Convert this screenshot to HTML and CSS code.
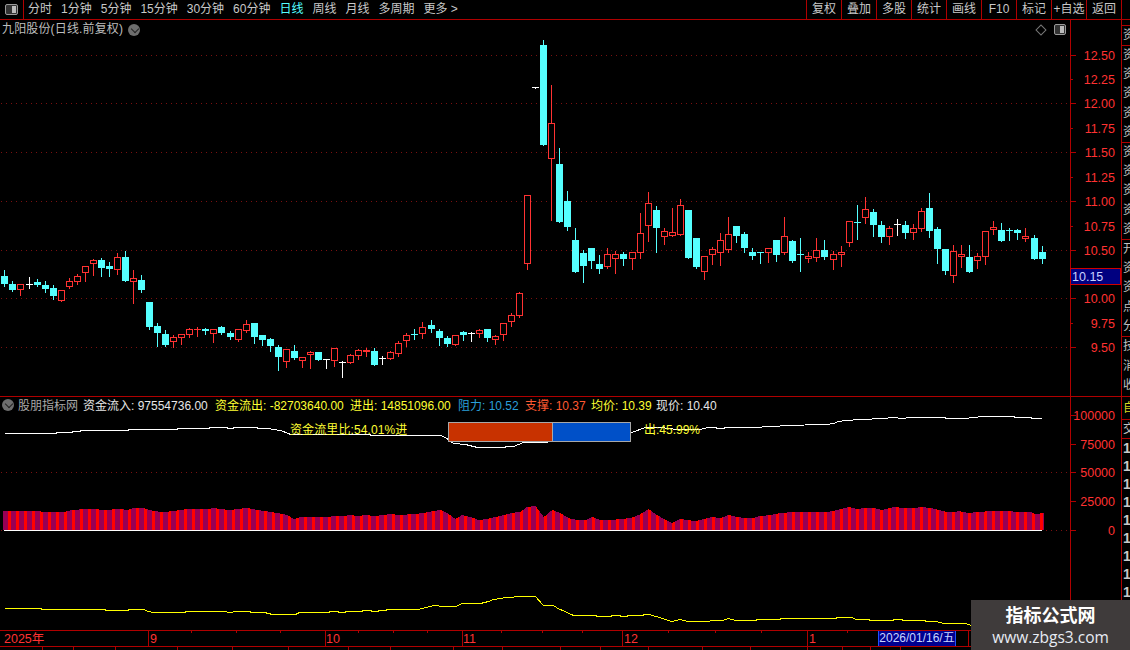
FILE: index.html
```html
<!DOCTYPE html>
<html lang="zh">
<head>
<meta charset="utf-8">
<title>九阳股份 日线</title>
<link rel="stylesheet" href="styles.css">
</head>
<body>
<div class="app">
  <header class="toolbar">
    <div class="layout-btn"><span class="panel-icon"><i></i></span></div>
    <nav class="periods">
      <span>分时</span><span>1分钟</span><span>5分钟</span><span>15分钟</span><span>30分钟</span><span>60分钟</span>
      <span class="active">日线</span><span>周线</span><span>月线</span><span>多周期</span><span>更多 &gt;</span>
    </nav>
    <div class="actions">
      <span>复权</span><span>叠加</span><span>多股</span><span>统计</span><span>画线</span><span>F10</span><span>标记</span><span>+自选</span><span>返回</span>
    </div>
    <div class="gutter"></div>
  </header>

  <section class="pane pane-main">
    <svg id="priceChart" class="chart" width="1121" height="376" viewBox="0 20 1121 376"></svg>
    <div class="title">九阳股份(日线.前复权)<span class="chev"></span></div>
    <div class="corner"><span class="diamond"></span><span class="panel-icon small"><i></i></span></div>
    <aside class="side side-main">
      <div class="side-group g1"><b>资</b></div>
      <div class="side-group g5"><b>资</b><b>资</b><b>资</b><b>资</b><b>资</b></div>
      <div class="side-group g5"><b>资</b><b>资</b><b>资</b><b>资</b><b>资</b></div>
      <div class="side-group g5"><b>开</b><b>资</b><b>资</b><b>点</b><b>分</b></div>
      <div class="side-group g3"><b>技</b><b>消</b><b>收</b></div>
    </aside>
  </section>

  <section class="pane pane-sub">
    <svg id="flowChart" class="chart" width="1121" height="233" viewBox="0 397 1121 233"></svg>
    <div class="legend">
      <span class="chev"></span><span class="name">股朋指标网</span>
      <span class="white w1">资金流入: 97554736.00</span>
      <span class="yellow w2">资金流出: -82703640.00</span>
      <span class="yellow w3">进出: 14851096.00</span>
      <span class="blue w4">阻力: 10.52</span>
      <span class="orange w5">支撑: 10.37</span>
      <span class="yellow w6">均价: 10.39</span>
      <span class="white">现价: 10.40</span>
    </div>
    <div class="ratio">
      <span class="ratio-in">资金流里比:54.01%进</span>
      <div class="ratio-bar"><i class="in"></i><i class="out"></i></div>
      <span class="ratio-out">出:45.99%</span>
    </div>
    <aside class="side side-sub">
      <div class="side-group g-tall"><b class="yellow">自</b></div>
      <div class="side-group g1"><b>交</b></div>
      <div class="side-group g-digits"><b>1</b><b>1</b><b>1</b><b>1</b><b>1</b><b>1</b><b>1</b><b>1</b><b>1</b></div>
    </aside>
  </section>

  <footer class="timeline">
    <svg id="timeAxis" class="chart" width="1130" height="20" viewBox="0 630 1130 20"></svg>
    <div class="date-tag">2026/01/16/五</div>
  </footer>

  <div class="watermark">
    <strong>指标公式网</strong>
    <span>www.zbgs3.com</span>
  </div>
</div>
<script src="chart.js"></script>
</body>
</html>
```

FILE: styles.css
```css
* { box-sizing: border-box; }
html, body { margin: 0; padding: 0; background: #000; }
body { width: 1130px; height: 650px; overflow: hidden; font-family: "Liberation Sans", "Noto Sans CJK SC", sans-serif; font-size: 12px; color: #c8c8c8; }
.app { position: relative; width: 1130px; height: 650px; display: flex; flex-direction: column; background: #000; }

.toolbar { display: flex; height: 20px; border-bottom: 1px solid #b00000; line-height: 19px; flex: none; }
.layout-btn { width: 24px; border-right: 1px solid #b00000; display: flex; align-items: center; justify-content: center; }
.panel-icon { display: block; width: 13px; height: 11px; border: 1px solid #9a9a9a; border-radius: 2px; background: #333; position: relative; }
.panel-icon i { position: absolute; right: 1px; top: 1px; bottom: 1px; width: 4px; background: #bbb; }
.periods { display: flex; gap: 9px; padding-left: 4px; flex: 1; }
.periods .active { color: #55ffff; }
.actions { display: flex; }
.actions span { width: 35px; border-left: 1px solid #b00000; text-align: center; white-space: nowrap; }
.gutter { width: 9px; border-left: 1px solid #b00000; }

.pane { position: relative; flex: none; }
.pane-main { height: 377px; border-bottom: 1px solid #b00000; }
.pane-sub { height: 233px; }
.chart { display: block; position: absolute; left: 0; top: 0; }
.chart text { font-family: "Liberation Sans", "Noto Sans CJK SC", sans-serif; font-size: 12.5px; fill: #ff3232; }

.title { position: absolute; left: 2px; top: 1px; line-height: 17px; display: flex; align-items: center; color: #bdbdbd; letter-spacing: 0.15px; }
.chev { display: inline-block; width: 12px; height: 12px; border-radius: 50%; background: #6e6e6e; position: relative; margin-left: 5px; flex: none; }
.chev::after { content: ""; position: absolute; left: 3.5px; top: 2.5px; width: 5px; height: 5px; border-right: 1.5px solid #222; border-bottom: 1.5px solid #222; transform: rotate(45deg); }
.corner { position: absolute; left: 1037px; top: 4px; display: flex; align-items: center; gap: 9px; }
.diamond { width: 8px; height: 8px; border: 1px solid #777; transform: rotate(45deg); }
.panel-icon.small { width: 12px; height: 11px; }

.side { position: absolute; left: 1121px; top: 0; width: 9px; bottom: 0; overflow: hidden; display: flex; flex-direction: column; border-left: 1px solid #b00000; }
.side-main { padding-top: 5px; }
.side-group { display: flex; flex-direction: column; flex: none; border-top: 1px solid #b00000; padding-left: 1px; overflow: hidden; }
.side-group b { display: block; flex: 1; font-weight: normal; width: 7px; white-space: nowrap; overflow: hidden; color: #c0c0c0; line-height: 19px; }
.side-group.g1 { height: 20px; }
.side-group.g5 { height: 97px; }
.side-group.g3 { height: 60px; }
.side-sub .side-group:first-child { border-top: 0; }
.side-group.g-tall { height: 22px; }
.side-group.g-tall b { line-height: 22px; }
.side-sub .g1 { height: 19px; }
.side-group.g-digits { border-top: 1px solid #b00000; padding-top: 0; }
.side-group.g-digits b { flex: none; height: 18px; line-height: 18px; font-size: 14px; font-weight: bold; color: #c8c8c8; }
.side-group b.yellow { color: #d8d820; }

.legend { position: absolute; left: 0; top: -1px; height: 17px; display: flex; align-items: center; white-space: nowrap; }
.legend .chev { margin-left: 2px; margin-right: 4px; }
.legend .name { color: #a8a8a8; width: 65px; }
.legend .w1 { width: 132px; }
.legend .w2 { width: 135px; }
.legend .w3 { width: 108px; }
.legend .w4 { width: 67px; }
.legend .w5 { width: 66px; }
.legend .w6 { width: 65px; }
.white { color: #e6e6e6; }
.yellow { color: #ffff33; }
.blue { color: #2a9fd8; }
.orange { color: #ff5a32; }

.ratio { position: absolute; left: 290px; top: 25px; display: flex; align-items: flex-start; color: #ffff33; white-space: nowrap; line-height: 17px; }
.ratio-in { width: 158px; letter-spacing: 0.1px; }
.ratio-out { margin-left: 13px; }
.ratio-bar { display: flex; width: 183px; height: 20px; border: 1px solid #a8a8a8; background: #a8a8a8; }
.ratio-bar i { display: block; height: 100%; }
.ratio-bar .in { width: 103px; background: #c83200; margin-right: 1px; }
.ratio-bar .out { flex: 1; background: #0050c8; }

.timeline { position: relative; height: 20px; flex: none; }
.date-tag { position: absolute; left: 878px; top: 1px; width: 78px; height: 15px; background: #000090; color: #c8d4ff; line-height: 15px; text-align: center; white-space: nowrap; border-left: 1px solid #2050ff; border-right: 1px solid #2050ff; }

.watermark { position: absolute; left: 971px; top: 600px; width: 159px; height: 50px; background: #3f3b3b; color: #fff; display: flex; flex-direction: column; align-items: center; justify-content: center; }
.watermark strong { font-size: 18px; line-height: 24px; font-weight: bold; }
.watermark span { font-size: 15.5px; line-height: 19px; color: #e8ecf4; font-family: "Open Sans", "Liberation Sans", sans-serif; }
```

FILE: chart.js
```js
var NS = 'http://www.w3.org/2000/svg';
var RED = '#ff3232', CYAN = '#55ffff', WHITE = '#ffffff', AXIS = '#b00000', GRID = '#7a1010';

function add(svg, tag, attrs, text) {
  var el = document.createElementNS(NS, tag);
  for (var k in attrs) el.setAttribute(k, attrs[k]);
  if (text !== undefined) el.textContent = text;
  svg.appendChild(el);
  return el;
}
function hline(svg, y, x1, x2, c) { add(svg, 'rect', { x: x1, y: y, width: x2 - x1, height: 1, fill: c }); }
function vline(svg, x, y1, y2, c) { add(svg, 'rect', { x: x, y: y1, width: 1, height: y2 - y1, fill: c }); }
function dotted(svg, y, x2) {
  add(svg, 'line', { x1: 1, y1: y + 0.5, x2: x2, y2: y + 0.5, stroke: GRID, 'stroke-width': 1, 'stroke-dasharray': '1 4' });
}
/* every series is read in zoom coordinates: [x, y] at a given scale, from a given origin */
function pts(ox, oy, sx, sy, list) {
  var r = [];
  for (var i = 0; i < list.length; i += 2) r.push([ox + list[i] / sx, oy + list[i + 1] / sy]);
  return r;
}
function poly(svg, p, c) {
  add(svg, 'polyline', {
    points: p.map(function (q) { return Math.round(q[0]) + '.5,' + Math.round(q[1]) + '.5'; }).join(' '),
    fill: 'none', stroke: c, 'stroke-width': 1, 'shape-rendering': 'crispEdges'
  });
}
function cx(i) { return Math.round(4.4 + 8.04 * i); }

/* ---------- price pane ---------- */
/* [type, wickTop, bodyTop, bodyBottom, wickBottom] */
var seg1 = [
['c',90,108,132,138],['c',123,132,150,153],['r',132,132,150,165],['w',111,131,133,144],['c',117,126,135,138],['c',123,135,147,156],['c',135,144,168,177],['r',150,150,183,183],['r',114,123,141,144],['r',102,108,126,132],['r',78,78,99,123],['r',57,60,72,105],['c',54,60,84,108],['c',66,78,87,108],['r',39,51,90,102],['c',33,51,123,123],['r',90,114,126,189],['c',105,120,150,156],['c',186,186,261,267],['c',249,258,279,318],['c',270,282,315,318],['r',285,291,306,321],['r',282,282,294,312],['r',264,267,285,291],['r',261,266,268,288],['c',264,267,273,282],['r',267,267,282,306],['c',258,261,279,282],['c',273,279,291,297],['r',267,267,300,303],['r',240,252,273,276],['c',249,249,291,309],['c',285,285,300,315],['c',294,297,318,333],['c',315,321,351,390],['r',327,327,366,381],['c',315,333,354,357],
['r',351,351,363,381],['r',333,336,345,384],['c',336,336,360,360],['w',357,357,359,384],['r',324,324,363,378],['w',363,366,368,411],['r',342,345,369,369],['r',327,330,348,357],['r',324,330,336,348],['c',324,333,375,375],['w',348,354,356,372],['r',333,336,357,357],['r',303,309,342,348],['r',279,285,303,318],['c',267,282,284,297],['r',246,261,282,294],['c',240,255,267,276],['c',267,273,294,315],['c',288,294,312,318],['r',285,285,315,315],['c',273,276,285,300],['w',276,278,280,303],['r',267,270,282,291],['c',267,267,294,303],['r',285,288,300,312],['r',249,249,285,300],['r',219,225,246,258],['r',156,159,228,231]
];
var seg2 = [
['r',496,496,701,717],['w',171,171,173,173],['c',30,45,345,345],['r',165,280,386,570],['c',354,402,576,576],['c',483,513,591,600],['c',594,630,726,726],['c',660,669,708,756],['c',654,654,693,714],['c',675,702,717,729],['r',654,672,711,714],['r',663,672,686,729],['c',666,672,687,705],['r',666,666,687,717],['r',549,609,669,684],['r',486,519,588,633],['c',528,540,594,666],['r',594,603,621,642],['r',534,606,618,618],['r',507,525,615,615],['c',540,540,684,684],['c',624,624,711,714],['r',678,678,726,747],['r',651,657,675,702],['r',609,630,669,705],['r',561,612,660,666],['c',588,588,618,636],['c',606,612,654,666],['c',654,666,678,687],['c',666,666,668,699],['r',654,654,669,696],['c',630,630,675,693],['r',561,618,669,672],['c',630,633,693,696]
];
var seg3 = [
['c',174,222,224,273],['r',216,229,237,246],['r',174,210,234,243],['c',180,210,231,237],['r',213,222,240,267],['r',198,216,225,258],['r',123,123,189,198],['c',75,126,128,177],['r',51,87,114,129],['c',87,96,135,168],['c',123,135,171,186],['r',138,144,171,192],['w',117,131,133,165],['c',123,135,159,174],['r',132,144,159,177],['r',84,93,147,153],['c',39,84,153,171],['c',141,147,207,249],['c',207,207,273,282],['r',195,213,288,306],['r',195,222,231,261],['c',195,231,276,276],['r',219,228,243,264],['r',153,153,231,252],['r',123,141,150,162],['c',129,150,183,183],['c',144,149,151,180],['c',147,150,159,177],['r',144,168,177,183],['c',165,174,237,237],['c',198,216,237,249]
];
var candles = [];
function load(seg, base) {
  seg.forEach(function (s) {
    candles.push([s[0], base + s[1] / 3, base + s[2] / 3, base + s[3] / 3, base + s[4] / 3]);
  });
}
load(seg1, 240); load(seg2, 30); load(seg3, 180);

var price = document.getElementById('priceChart');
[55, 103, 152, 201, 250, 298, 347].forEach(function (y) { dotted(price, y, 1068); });
vline(price, 1070, 20, 396, AXIS);

candles.forEach(function (d, i) {
  var x = cx(i), c = d[0] === 'c' ? CYAN : d[0] === 'r' ? RED : WHITE;
  var top = Math.round(d[1]), bt = Math.round(d[2]), bb = Math.round(d[3]), bot = Math.round(d[4]);
  vline(price, x, top, bot + 1, c);
  if (bb - bt <= 1) {
    hline(price, bt, x - 3, x + 4, c);
  } else if (d[0] === 'c') {
    add(price, 'rect', { x: x - 3, y: bt, width: 7, height: bb - bt, fill: c });
  } else {
    add(price, 'rect', { x: x - 3, y: bt, width: 7, height: bb - bt, fill: '#000' });
    add(price, 'rect', { x: x - 2.5, y: bt + 0.5, width: 6, height: bb - bt - 1, fill: 'none', stroke: c, 'stroke-width': 1 });
  }
});

var priceLabels = [['12.50',55],['12.25',79],['12.00',103],['11.75',128],['11.50',152],['11.25',177],['11.00',201],['10.75',226],['10.50',250],['10.00',298],['9.75',323],['9.50',347]];
priceLabels.forEach(function (l) {
  hline(price, l[1], 1071, l[0].slice(-2) === '00' || l[0].slice(-2) === '50' ? 1076 : 1073, AXIS);
  add(price, 'text', { x: 1115, y: l[1] + 5, 'text-anchor': 'end' }, l[0]);
});
add(price, 'rect', { x: 1070.5, y: 268.5, width: 50, height: 16, fill: '#000080', stroke: '#d00000', 'stroke-width': 1 });
var tag = add(price, 'text', { x: 1072, y: 281 }, '10.15');
tag.style.fill = '#c8d0ff';

/* ---------- money-flow pane ---------- */
var flow = document.getElementById('flowChart');
dotted(flow, 472, 1068);
dotted(flow, 530, 1068);
vline(flow, 1070, 397, 630, AXIS);

var tops = pts(0, 395, 3, 3, [0,348,120,348,125,351,190,351,210,346,250,342,290,342,300,345,330,345,340,342,360,342,380,345,400,339,430,339,445,345,470,349,490,352,510,349,540,345,560,342,620,342,640,339,660,342,690,345,710,342,740,339,770,345,800,349,830,354,860,360,880,372,900,366,980,366,1000,363,1030,363,1050,360,1070,363,1100,360,1120,363,1150,360,1170,357,1197,360])
  .concat(pts(400, 395, 3, 3, [0,360,40,357,70,354,100,348,120,345,140,354,165,372,185,360,210,366,235,375,260,372,285,366,310,360,335,354,360,350,380,336,405,333,430,366,455,345,480,354,505,370,530,375,555,375,575,366,600,375,630,375,660,372,690,369,715,360,745,342,765,357,790,372,815,384,840,372,860,375,885,378,910,372,935,366,960,369,985,360,1010,366,1035,369,1060,369,1078,363]))
  .concat(pts(760, 395, 3, 3, [0,363,30,360,60,354,100,351,200,351,230,345,265,336,290,342,310,339,340,339,365,345,400,336,430,339,460,339,485,336,510,339,535,345,560,351,600,349,625,354,650,351,680,349,750,349,780,351,810,351,825,357,849,354]));
function topAt(x) {
  for (var i = 1; i < tops.length; i++) {
    if (x <= tops[i][0]) {
      var a = tops[i - 1], b = tops[i], t = (x - a[0]) / ((b[0] - a[0]) || 1);
      return Math.round(a[1] + (b[1] - a[1]) * t);
    }
  }
  return Math.round(tops[tops.length - 1][1]);
}
for (var bx = 3; bx < 1044; bx++) {
  var phase = (bx - 3) % 8;
  add(flow, 'rect', { x: bx, y: topAt(bx), width: 1, height: 530 - topAt(bx), fill: phase >= 5 ? '#ff0000' : '#980055' });
}
hline(flow, 530, 4, 1042, WHITE);

var upper = pts(0, 395, 3, 3, [12,115,168,115,168,112,216,112,216,108,240,108,240,105,384,105,384,102,530,102,530,99,628,99,628,96,680,96,680,99,700,99,700,96,772,96,772,99,800,99,820,102,840,105,865,114,870,117,1050,117,1110,117,1110,120,1197,120])
  .concat(pts(400, 395, 3, 3, [0,120,120,120,135,126,160,144,195,147,230,156,290,156,340,153,370,141,428,141,692,112,735,96,780,96,830,102,900,102,920,96,945,96,950,99,970,99,975,96,1080,96]))
  .concat(pts(760, 395, 3, 3, [0,96,10,93,50,93,65,90,200,87,220,84,235,78,255,75,300,72,370,69,400,66,425,69,447,66,545,66,565,69,615,69,640,66,665,63,760,63,765,66,810,66,815,69,843,69]));
poly(flow, upper, '#ffffff');

var lower = pts(0, 570, 2.8, 3, [11,115,115,115,115,118,295,118,295,121,358,121,358,118,400,118,415,124,428,127,518,127,518,124,632,124,635,127,650,127,652,124,700,124,700,127,745,127,745,130,768,133,826,133,838,127,920,127,920,124,945,124,945,127,966,127,966,124,1014,124,1014,121,1040,121,1040,124,1058,124,1058,121,1080,121,1080,118,1170,118,1190,112,1215,106,1240,109,1278,109,1292,100,1344,100,1365,94,1380,88,1418,82,1462,79,1498,79,1520,106,1548,106,1566,118])
  .concat(pts(560, 570, 2.75, 3, [0,118,35,135,100,135,100,139,140,139,140,136,165,136,165,139,185,139,185,136,228,136,228,133,245,133,280,145,305,154,330,148,350,154,380,154,445,151,462,145,482,151,540,151,540,148,605,148,605,145,760,145,760,142,800,142,815,148,850,148,850,151,915,151,915,148,940,148,940,151,1005,151,1005,154,1035,154,1052,160,1115,160,1131,165]));
poly(flow, lower, '#ffff00');

[['100000',415],['75000',444],['50000',472],['25000',501],['0',530]].forEach(function (l) {
  hline(flow, l[1], 1071, 1076, AXIS);
  add(flow, 'text', { x: 1115, y: l[1] + 5, 'text-anchor': 'end' }, l[0]);
});

/* ---------- time axis ---------- */
var time = document.getElementById('timeAxis');
hline(time, 630, 0, 1130, AXIS);
hline(time, 646, 0, 1130, AXIS);
[[4,'2025年'],[150,'9'],[326,'10'],[463,'11'],[624,'12'],[809,'1']].forEach(function (l) {
  add(time, 'text', { x: l[0], y: 643 }, l[1]);
});
[148, 325, 462, 622, 807, 968].forEach(function (x) { vline(time, x, 630, 646, AXIS); });
[191, 236, 280, 358, 393, 427, 501, 542, 582, 668, 715, 761, 847].forEach(function (x) { vline(time, x, 630, 633, AXIS); });
[42, 73, 115, 177, 232, 288, 348, 390, 453, 502, 560, 600, 648, 702, 750, 807, 842, 870, 900].forEach(function (x) { vline(time, x, 646, 650, AXIS); });
```
